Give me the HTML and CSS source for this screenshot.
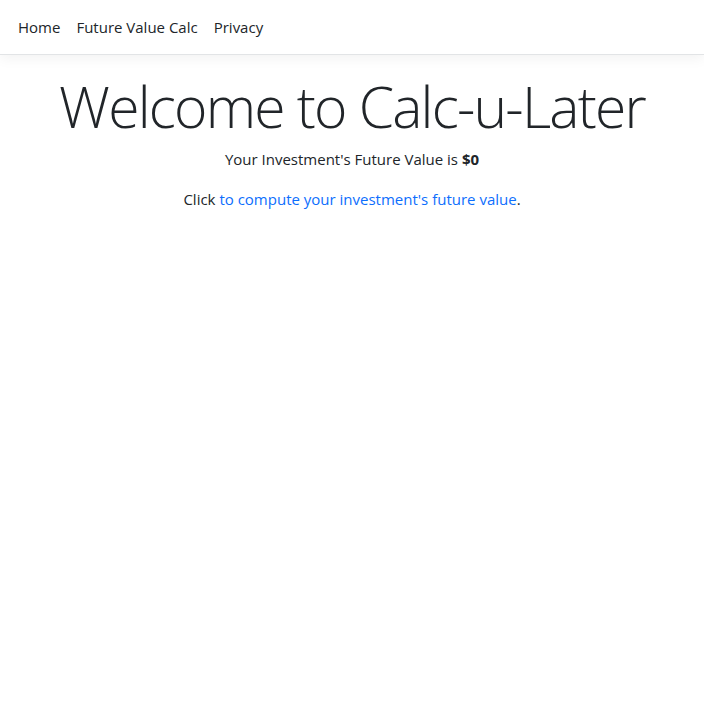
FILE: index.html
```html
<!DOCTYPE html>
<html lang="en">
<head>
<meta charset="utf-8">
<title>Calc-u-Later</title>
<link rel="stylesheet" href="styles.css">
</head>
<body>
<header>
  <nav class="navbar">
    <ul class="nav-list">
      <li><a class="nav-link" href="#">Home</a></li>
      <li><a class="nav-link" href="#">Future Value Calc</a></li>
      <li><a class="nav-link" href="#">Privacy</a></li>
    </ul>
  </nav>
</header>
<main class="content">
  <h1 class="display">Welcome to Calc-u-Later</h1>
  <p class="line">Your Investment's Future Value is <strong>$0</strong></p>
  <p class="line">Click <a class="link" href="#">to compute your investment's future value</a>.</p>
</main>
</body>
</html>
```
FILE: styles.css
```css
html, body {
  margin: 0;
  padding: 0;
  background: #fff;
}
body {
  font-family: "Open Sans", "Noto Sans", sans-serif;
  font-size: 15px;
  line-height: 24px;
  color: #212529;
}
.navbar {
  height: 55px;
  box-sizing: border-box;
  border-bottom: 1px solid #e2e4e6;
  box-shadow: 0 4px 12px rgba(0, 0, 0, 0.05);
  display: flex;
  align-items: center;
  padding: 0 10px;
}
.nav-list {
  list-style: none;
  margin: 0;
  padding: 0;
  display: flex;
}
.nav-link {
  display: block;
  padding: 0 8px;
  color: #212529;
  text-decoration: none;
}
.content {
  text-align: center;
  padding: 14px 12px 0;
}
.display {
  font-weight: 300;
  font-size: 57px;
  line-height: 70px;
  margin: 0 0 6px;
  padding-top: 2px;
  letter-spacing: -1.8px;
}
.line {
  margin: 0 0 16px;
}
.link {
  color: #0d6efd;
  text-decoration: none;
}
strong {
  font-weight: 700;
}
```
